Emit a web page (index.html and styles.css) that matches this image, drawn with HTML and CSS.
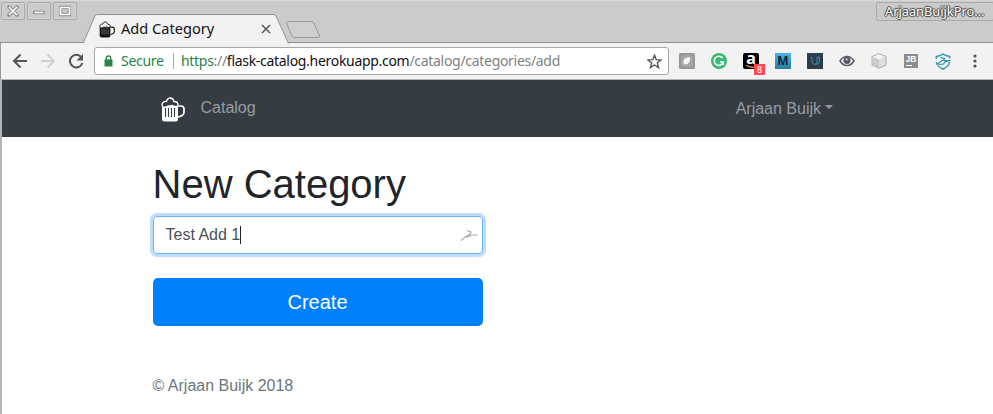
FILE: index.html
```html
<!DOCTYPE html>
<html lang="en">
<head>
<meta charset="utf-8">
<title>Add Category</title>
<link rel="stylesheet" href="styles.css">
</head>
<body>
<svg class="symbols" width="0" height="0">
  <symbol id="mug" viewBox="0 0 24 25">
    <path d="M1 9V22Q1 24.500 4 24.500H14.500Q17 24.500 17 22V9Z" fill="currentColor"/>
    <path d="M17 9H20Q23 9 23 12V15Q23 19 17 20" fill="none" stroke="currentColor" stroke-width="1.700"/>
    <path class="foam" d="M2 10Q0 7.500 2 5.500Q3.500 4 5.500 4.500Q6.500 1 9.500 1Q12 1 13 4.500Q17 4.500 17 8Q17 9.500 15 9.500H13Q11.500 7.500 10 9H7Q5 10.500 2 10Z" stroke="currentColor" stroke-width="1.300"/>
    <path class="slots" d="M4.500 11V20M7.500 11V20M10.500 11V20M13.500 11V20" fill="none" stroke-width="1.100"/>
  </symbol>
</svg>
<header class="titlebar">
  <div class="window-buttons">
    <span class="wbtn"><svg width="12" height="12" viewBox="0 0 12 12"><path class="rim" d="M2 2l8 8M10 2l-8 8"/><path class="face" d="M2 2l8 8M10 2l-8 8"/></svg></span>
    <span class="wbtn"><svg width="12" height="12" viewBox="0 0 12 12"><path class="rim" d="M1.500 7.500h9"/><path class="face" d="M1.500 7.500h9"/></svg></span>
    <span class="wbtn"><svg width="12" height="12" viewBox="0 0 12 12"><path class="rim" d="M1.500 2.500h9v7h-9z"/><path class="face" d="M1.500 2.500h9v7h-9z"/></svg></span>
  </div>
  <div class="tab">
    <svg class="tab-shape" width="207" height="30" viewBox="0 0 207 30"><path d="M0 29.500L12 2Q13 .5 15 .5H190Q192 .5 193 2L205.500 29.500" fill="#f2f2f2" stroke="#929292"/><path d="M1 29.500H205" stroke="#f2f2f2"/></svg>
    <svg class="favicon" width="16" height="17"><use href="#mug"/></svg>
    <span class="tab-title">Add Category</span>
    <svg class="tab-close" width="10" height="10" viewBox="0 0 10 10"><path d="M1 1l8 8M9 1l-8 8" stroke="#5a5a5a" stroke-width="1.600"/></svg>
  </div>
  <svg class="new-tab" width="35" height="18" viewBox="0 0 35 18"><path d="M2 .5H25Q27 .5 28 2L33.500 15Q34 16.500 32 16.500H9Q7 16.500 6 15L.5 2Q0 .5 2 .5Z" fill="#cfcfcf" stroke="#999"/></svg>
  <div class="profile">ArjaanBuijkPro...</div>
</header>
<div class="toolbar">
  <nav class="history">
    <svg width="16" height="16" viewBox="0 0 16 16"><path d="M15 8H2M8.500 1.500L2 8l6.500 6.500" fill="none" stroke="#555" stroke-width="2"/></svg>
    <svg width="16" height="16" viewBox="0 0 16 16"><path d="M1 8h13M7.500 1.500L14 8l-6.500 6.500" fill="none" stroke="#d0d0d0" stroke-width="2"/></svg>
    <svg width="16" height="16" viewBox="0 0 16 16"><path d="M13.200 4.200A6.300 6.300 0 1 0 14.300 10" fill="none" stroke="#555" stroke-width="2"/><path d="M15 1v6.500H8.500z" fill="#555"/></svg>
  </nav>
  <div class="omnibox">
    <svg class="lock" width="9" height="12" viewBox="0 0 9 12"><path d="M.5 4.500h8v7h-8z" fill="#2a8447"/><path d="M2.300 5V3Q2.300 1 4.500 1T6.700 3V5" fill="none" stroke="#2a8447" stroke-width="1.300"/></svg>
    <span class="secure">Secure</span>
    <span class="url"><i class="scheme">https</i>://<b>flask-catalog.herokuapp.com</b>/catalog/categories/add</span>
    <svg class="star" width="15" height="15" viewBox="0 0 15 15"><path d="M7.500 1.300L9.200 5.700L14 6L10.300 9L11.500 13.600L7.500 11L3.500 13.600L4.700 9L1 6L5.800 5.700Z" fill="none" stroke="#555" stroke-width="1.400"/></svg>
  </div>
  <div class="extensions">
    <span><svg width="16" height="16"><rect width="16" height="16" rx="1.500" fill="#969696"/><rect x="2" y="2" width="12" height="12" rx="3" fill="#a6a6a6"/><path d="M4.500 10Q3.500 6 8 4.500L10.500 4Q12 7 9.500 10Q6 13 4.500 10" fill="#f8f8f8"/></svg></span>
    <span><svg width="16" height="16"><circle cx="8" cy="8" r="8" fill="#39b978"/><path d="M11.500 5A4.600 4.600 0 1 0 12.300 9H9M12.300 8.500V12" fill="none" stroke="#fff" stroke-width="1.500"/></svg></span>
    <span class="amazon"><em>a</em><svg class="smile" width="12" height="4"><path d="M1 0Q6 4 11 1" fill="none" stroke="#f29a22" stroke-width="1.300"/></svg><small>8</small></span>
    <span><strong class="m">M</strong></span>
    <span><svg width="16" height="16"><rect width="16" height="16" fill="#2f3d49"/><path d="M3.500 4.500H5V8Q5 11.500 7.500 11.500T10 8.500V4H12.500V8Q12.500 11.500 9.500 11.500" fill="none" stroke="#3693b0" stroke-width="1"/></svg></span>
    <span><svg class="eye" width="16" height="12" viewBox="0 0 16 12"><path d="M1 6Q4 1.500 8 1.500T15 6Q12 10.500 8 10.500T1 6Z" fill="#fff" stroke="#555b60" stroke-width="1.500"/><circle cx="8" cy="5.500" r="3.600" fill="#555b60"/><circle cx="7.700" cy="4.500" r="1.100" fill="#ddd"/></svg></span>
    <span><svg width="16" height="16"><path d="M8 .7L15 3.500V12L8 15.300L1 12V3.500Z" fill="#dedede" stroke="#aaa"/><path d="M1.500 4L8 6.500V15L1.500 12Z" fill="#cacaca"/><path d="M2 3.700L8 1.200L14 3.700L8 6.500Z" fill="#f4f4f4"/></svg></span>
    <span><strong class="jb">JB</strong></span>
    <span><svg width="16" height="17" viewBox="0 0 16 17"><path d="M1.300 6V3.500Q5 3 8 1Q11 3 14.700 3.500V5.500M1.300 9Q2 13.500 8 16Q14 13.500 14.600 9" fill="none" stroke="#2794aa" stroke-width="1.400"/><path d="M2 11.500L7 7.500H15.500L10 8.700L8.500 11L4 11.500M5.500 4.700L9.500 5.500L8.500 7.500" fill="none" stroke="#2794aa" stroke-width="1.200"/></svg></span>
    <span><svg width="4" height="14"><g fill="#555"><circle cx="2" cy="2" r="1.600"/><circle cx="2" cy="7" r="1.600"/><circle cx="2" cy="12" r="1.600"/></g></svg></span>
  </div>
</div>
<div class="page">
  <nav class="navbar">
    <div class="container">
      <svg class="brand" width="24" height="25"><use href="#mug"/></svg>
      <a class="catalog">Catalog</a>
      <a class="user">Arjaan Buijk</a>
    </div>
  </nav>
  <main class="container">
    <h1>New Category</h1>
    <div class="field"><span>Test Add 1</span><svg width="18" height="14" viewBox="0 0 18 14"><path d="M1 12.500L6 8.500L8 7H17.500M7 2.500L11 4L9 7M4 9.500L11 8" fill="none" stroke="#aaa" stroke-width="1.200"/></svg></div>
    <button class="create">Create</button>
    <footer>© Arjaan Buijk 2018</footer>
  </main>
</div>
</body>
</html>
```
FILE: styles.css
```css
* { box-sizing: border-box; }
body { margin: 0; background: #fff; overflow: hidden; font-family: "Liberation Sans", sans-serif; }
svg { display: block; flex: none; }
.symbols { position: absolute; }

.titlebar { display: flex; align-items: flex-start; height: 43px; padding-left: 1px; background: #cbcbcb; border-top: 1px solid #d8d8d8; border-bottom: 1px solid #929292; font-family: "Noto Sans", sans-serif; }
.window-buttons { display: flex; gap: 2px; padding-top: 1px; width: 82px; flex: none; }
.wbtn { display: flex; align-items: center; justify-content: center; width: 24px; height: 18px; border: 1px solid #aaa; border-radius: 2px; box-shadow: inset 0 0 0 1px #d3d3d3; }
.rim { fill: none; stroke: #8d8d8d; stroke-width: 3.400; stroke-linecap: round; }
.face { fill: none; stroke: #fff; stroke-width: 1.600; }
.tab { position: relative; display: flex; align-items: center; width: 206px; height: 30px; margin-top: 13px; padding-left: 16px; flex: none; }
.tab-shape { position: absolute; left: 0; top: 0; }
.favicon, .tab-title, .tab-close { position: relative; }
.favicon { color: #151515; --foam: #eee; --slots: #777; }
.tab-title { width: 140px; margin: -2px 0 0 6px; font-size: 14.600px; line-height: 20px; color: #111; white-space: nowrap; }
.foam { fill: var(--foam); }
.slots { stroke: var(--slots); }
.new-tab { margin: 20px 0 0 -3px; }
.profile { width: 118px; height: 19px; margin: 1px -1px 0 auto; padding-left: 8px; border: 1px solid #aaa; border-radius: 2px; font-size: 12.800px; line-height: 17px; white-space: nowrap; color: #fff; text-shadow: 1px 0 1px #444, -1px 0 1px #444, 0 1px 1px #444, 0 -1px 1px #444; }

.toolbar { display: flex; align-items: center; height: 37px; padding: 0 2px 0 12px; background: #f2f2f2; border-bottom: 1px solid #b2b2b2; box-shadow: inset 1px 0 #999; font-family: "Noto Sans", sans-serif; }
.history { display: flex; gap: 12px; width: 82px; flex: none; }
.omnibox { display: flex; align-items: center; width: 575px; height: 28px; padding: 0 6px 0 9px; background: #fff; border: 1px solid #a8a8a8; border-radius: 3px; font-size: 14px; flex: none; }
.secure { width: 53px; margin-left: 8px; color: #2a8447; border-right: 1px solid #aaa; line-height: 16px; letter-spacing: -.3px; }
.url { flex: 1; margin: -1px 0 0 7px; color: #808080; white-space: nowrap; letter-spacing: -.3px; }
.url i { font-style: normal; color: #2a8447; }
.url b { font-weight: 400; color: #111; }
.extensions { display: grid; grid-template-columns: repeat(10, 32px); margin-left: 2px; }
.extensions > span { display: flex; height: 20px; align-items: center; justify-content: center; }
.extensions .amazon { position: relative; width: 16px; height: 16px; margin: 2px 8px; background: #000; border-radius: 2px; }
.amazon em { font: 700 16px/12px "Open Sans", sans-serif; color: #fff; margin-top: -6px; }
.smile { position: absolute; left: 2px; bottom: 0; }
.amazon small { position: absolute; left: 11px; top: 11px; width: 11px; height: 11px; background: #ff4858; color: #fff; font: 9px/11px "Noto Sans", sans-serif; text-align: center; }
.m { width: 16px; height: 16px; background: linear-gradient(#4db2e5, #287da5); color: #102734; font: 700 12px/16px "Open Sans", sans-serif; text-align: center; }
.jb { width: 14px; height: 14px; background: linear-gradient(#fff, #fff) 2px 11px / 6px 1px no-repeat #8c8c8c; color: #fff; font: 700 8.500px/10px "Liberation Sans", sans-serif; text-align: center; }

.page { height: 334px; border-left: 2px solid #b5b5b5; background: #fff; }
.container { width: 690px; margin-left: 150.500px; }
.navbar { height: 57px; background: #363c43; }
.navbar .container { display: flex; align-items: center; height: 57px; padding-left: 8px; font-size: 16px; color: #999c9f; }
.brand { color: #fff; margin-top: 1px; --foam: #363c43; --slots: #363c43; }
.catalog { margin-left: 16px; margin-top: -2px; }
.user { display: flex; align-items: center; margin-left: auto; margin-right: 9.500px; }
.user::after { content: ""; margin: -3px 0 0 4px; border: 4.500px solid transparent; border-top-color: currentColor; border-bottom: 0; }
h1 { margin: 0; padding-top: 23px; font-size: 40px; font-weight: 400; line-height: 48px; color: #212529; }
.field { display: flex; align-items: center; justify-content: space-between; width: 330px; height: 38px; margin-top: 8px; padding: 0 4px 0 12px; border: 1px solid #66b5fa; border-radius: 4px; box-shadow: 0 0 0 3px #bfdeff; font-size: 16px; color: #495057; }
.field span { border-right: 1px solid #222; line-height: 18px; }
.create { display: block; width: 330px; height: 48px; margin-top: 24px; padding: 0; border: 0; border-radius: 5px; background: #0080fb; color: #fff; font: 20px/48px "Liberation Sans", sans-serif; }
footer { margin-top: 48px; font-size: 16px; line-height: 24px; color: #6c757d; }
```
